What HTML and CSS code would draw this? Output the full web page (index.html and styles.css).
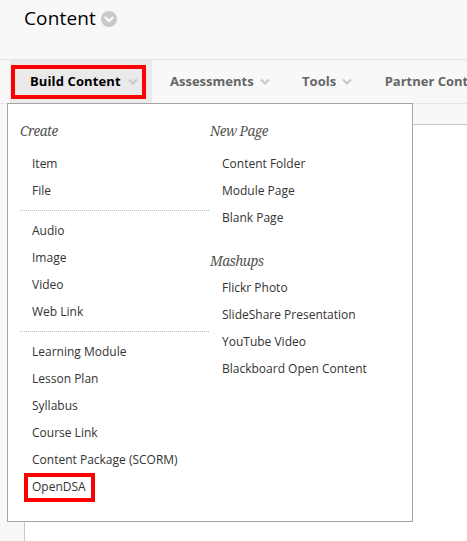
FILE: index.html
```html
<!DOCTYPE html>
<html lang="en">
<head>
<meta charset="utf-8">
<title>Content</title>
<link rel="stylesheet" href="styles.css">
</head>
<body>
<header class="page-title">
  <h1>Content</h1>
  <svg class="title-icon" width="16" height="16" viewBox="0 0 16 16"><circle cx="8" cy="8" r="8" fill="#c9c9c9"/><path d="M3.8 6l4.2 4 4.2-4" fill="none" stroke="#fff" stroke-width="2.2"/></svg>
</header>
<nav class="action-bar">
  <div class="tab active"><span class="label build">Build Content</span><svg class="chev" width="10" height="8" viewBox="0 0 10 8"><path d="M1 1.5l4 4 4-4"/></svg><span class="mark mark-tab"></span></div>
  <div class="tab"><span class="label">Assessments</span><svg class="chev" width="10" height="8" viewBox="0 0 10 8"><path d="M1 1.5l4 4 4-4"/></svg></div>
  <div class="tab"><span class="label">Tools</span><svg class="chev" width="10" height="8" viewBox="0 0 10 8"><path d="M1 1.5l4 4 4-4"/></svg></div>
  <div class="tab partner"><span class="label">Partner Content</span></div>
</nav>
<main class="panel"></main>
<div class="menu">
  <section class="column">
    <h2>Create</h2>
    <ul><li>Item</li><li>File</li></ul>
    <hr>
    <ul><li>Audio</li><li>Image</li><li>Video</li><li>Web Link</li></ul>
    <hr>
    <ul><li>Learning Module</li><li>Lesson Plan</li><li>Syllabus</li><li>Course Link</li><li>Content Package (SCORM)</li><li>OpenDSA<span class="mark mark-item"></span></li></ul>
  </section>
  <section class="column">
    <h2>New Page</h2>
    <ul><li>Content Folder</li><li>Module Page</li><li>Blank Page</li></ul>
    <h2 class="second">Mashups</h2>
    <ul><li>Flickr Photo</li><li>SlideShare Presentation</li><li>YouTube Video</li><li>Blackboard Open Content</li></ul>
  </section>
</div>
</body>
</html>
```
FILE: styles.css
```css
* { box-sizing: border-box; }
body {
  margin: 0;
  height: 541px;
  overflow: hidden;
  background: #f8f8f8;
  font-family: "Open Sans", "Noto Sans", sans-serif;
  font-size: 12px;
  color: #333;
}
.page-title {
  display: flex;
  align-items: flex-start;
  gap: 5px;
  height: 59px;
  padding: 4px 0 0 24px;
}
h1 {
  width: 72px;
  margin: 0;
  font-size: 19px;
  line-height: 28px;
  font-weight: 400;
  letter-spacing: 0.15px;
  color: #000;
}
.title-icon { margin-top: 7px; }
.action-bar {
  display: flex;
  height: 45px;
  padding-left: 10px;
  border-top: 1px solid #e6e6e6;
  border-bottom: 1px solid #e6e6e6;
  white-space: nowrap;
  overflow: hidden;
}
.tab {
  position: relative;
  display: flex;
  flex: none;
  align-items: center;
  gap: 6px;
  padding: 0 14.5px 2px 18px;
  font-size: 13px;
  font-weight: 700;
  color: #666;
}
.tab.active {
  width: 142px;
  padding-left: 20px;
  background: #eaeaea;
  color: #000;
}
.build { width: 91.5px; letter-spacing: 0.12px; }
.tab.partner { min-width: 0; flex: 1; }
.chev { flex: none; margin-top: 3px; }
.chev path { fill: none; stroke: #c8c8c8; stroke-width: 2.2; }
.mark { position: absolute; border: 4px solid #f00; }
.mark-tab { left: 1px; top: 5px; width: 135px; height: 34px; }
.panel {
  height: 417px;
  margin: 20px 0 0 24px;
  background: #fff;
  border-top: 1px solid #c8c8c8;
  border-left: 1px solid #c8c8c8;
}
.menu {
  position: absolute;
  left: 7px;
  top: 103px;
  display: flex;
  width: 406px;
  height: 419px;
  padding: 14px 12px;
  background: #fff;
  border: 1px solid #a5a5a5;
}
.column { width: 190px; }
h2 {
  margin: 0 0 5px;
  font: italic 400 13.5px/27px "Noto Serif", "Liberation Serif", serif;
  letter-spacing: -0.5px;
  color: #555;
}
h2.second { margin: 17px 0 -1px; }
ul { margin: 0; padding: 0; list-style: none; }
li { position: relative; height: 27px; padding-left: 12px; line-height: 27px; white-space: nowrap; }
hr {
  width: 189px;
  height: 1px;
  margin: 6px 0;
  border: 0;
  border-top: 1px dotted #bbb;
}
.mark-item { left: 4px; top: 0; width: 71px; height: 29px; }
```
